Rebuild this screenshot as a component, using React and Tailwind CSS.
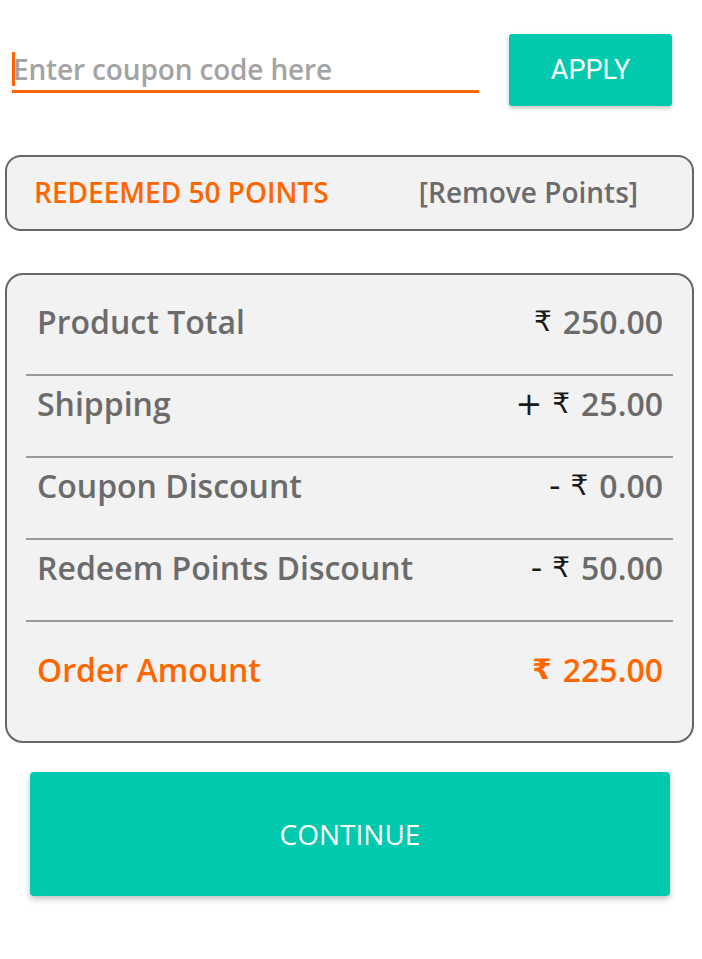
import React from 'react';

const rows = [
  { label: 'Product Total', sign: '', amount: '250.00' },
  { label: 'Shipping', sign: '+', amount: '25.00' },
  { label: 'Coupon Discount', sign: '-', amount: '0.00' },
  { label: 'Redeem Points Discount', sign: '-', amount: '50.00' },
];

const Amount = ({ sign, amount, orange }) => (
  <div className="flex items-center">
    {sign && (
      <span className={`mr-[10px] text-[32px] font-normal ${orange ? 'text-[#ff6600]' : 'text-[#1a1a1a]'}`} style={{ fontFamily: '"DejaVu Sans", sans-serif' }}>
        {sign}
      </span>
    )}
    <span className={`mr-[11px] text-[28px] ${orange ? 'text-[#ff6600] font-bold' : 'text-[#1a1a1a] font-normal'}`} style={{ fontFamily: '"DejaVu Sans", sans-serif' }}>
      ₹
    </span>
    <span>{amount}</span>
  </div>
);

export default function App() {
  return (
    <div className="w-[702px] h-[959px] bg-white" style={{ fontFamily: '"Open Sans", sans-serif' }}>
      {/* Coupon */}
      <div className="flex items-center gap-[30px] pt-[34px] pl-[12px] pr-[30px]">
        <div className="relative flex-1 h-[45px] border-b-[3px] border-[#ff6600]">
          <span className="absolute left-0 top-[4px] w-[3px] h-[34px] bg-[#ff6600]" />
          <input
            type="text"
            placeholder="Enter coupon code here"
            className="w-full h-full pl-[1px] bg-transparent text-[28px] font-semibold tracking-[-0.15px] text-[#333] placeholder:text-[#a3a3a3] outline-none"
          />
        </div>
        <button
          className="w-[163px] h-[72px] rounded-[3px] bg-[#00c9ad] text-white text-[27px] shadow-[0_2px_4px_rgba(0,0,0,0.25)]"
          style={{ fontFamily: 'Roboto, sans-serif' }}
        >
          APPLY
        </button>
      </div>

      {/* Redeemed points */}
      <div className="ml-[5px] mt-[49px] w-[689px] h-[76px] flex items-center justify-between pl-[27px] pr-[54px] bg-[#f2f2f2] border-2 border-[#666] rounded-[16px]">
        <span className="text-[28px] font-semibold text-[#ff6600] -mt-[2px]">REDEEMED 50 POINTS</span>
        <span className="text-[28px] font-semibold text-[#6b6b6b] -mt-[2px]">[Remove Points]</span>
      </div>

      {/* Summary */}
      <div className="ml-[5px] mt-[42px] w-[689px] bg-[#f2f2f2] border-2 border-[#666] rounded-[18px] px-[19px] pt-[19px] pb-[49px]">
        {rows.map((r) => (
          <div key={r.label} className="border-b-2 border-[#9a9a9a]">
            <div className="flex justify-between items-center h-[44px] mt-[6px] mb-[30px] pl-[11px] pr-[10px] text-[32px] font-semibold text-[#6b6b6b]">
              <span>{r.label}</span>
              <Amount sign={r.sign} amount={r.amount} />
            </div>
          </div>
        ))}
        <div className="flex justify-between items-center h-[44px] mt-[26px] pl-[11px] pr-[10px] text-[32px] font-semibold text-[#ff6600]">
          <span>Order Amount</span>
          <Amount amount="225.00" orange />
        </div>
      </div>

      {/* Continue */}
      <button className="ml-[30px] mt-[29px] w-[640px] h-[124px] rounded-[4px] bg-[#00c9ad] text-white text-[28px] shadow-[0_3px_6px_rgba(0,0,0,0.25)]">
        CONTINUE
      </button>
    </div>
  );
}
